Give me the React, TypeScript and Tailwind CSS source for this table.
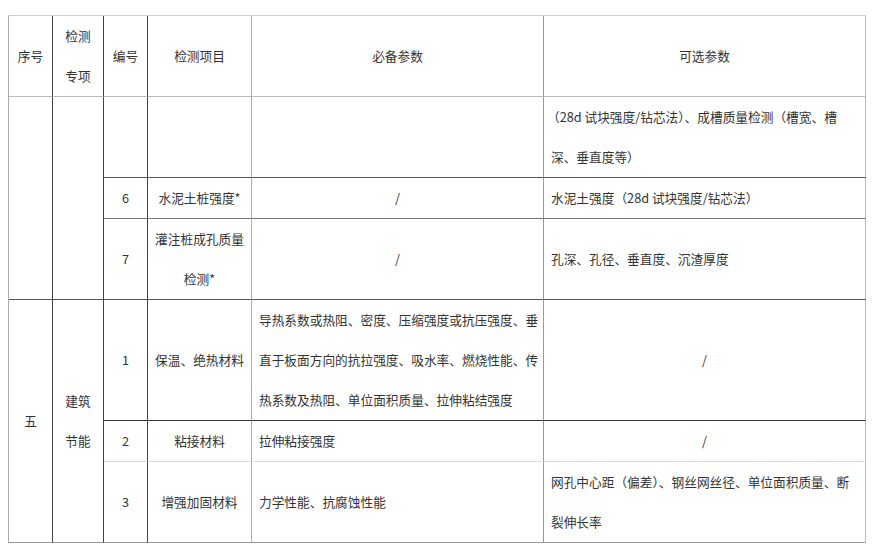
import React from 'react';

const font = { fontFamily: '"Microsoft YaHei", "Noto Sans CJK SC", "Noto Sans", sans-serif' };

export default function App() {
  return (
    <div className="w-[882px] h-[558px] bg-white pt-[15px] pl-2 text-[#333] text-[12.7px] leading-[40px]" style={font}>
      <table className="table-fixed w-[857px] border-separate border-spacing-0 border-t border-l border-t-[#cfcfcf] border-l-[#aaa]">
        <colgroup>
          <col className="w-[44px]" />
          <col className="w-[51px]" />
          <col className="w-[44px]" />
          <col className="w-[104px]" />
          <col className="w-[292px]" />
          <col className="w-[322px]" />
        </colgroup>
        <tbody>
          {/* header */}
          <tr className="h-[81px]">
            <td className="text-center align-middle border-r border-b border-r-[#444] border-b-[#bbb]">序号</td>
            <td className="text-center align-middle border-r border-b border-r-[#444] border-b-[#bbb]">
              检测<br />专项
            </td>
            <td className="text-center align-middle border-r border-b border-r-[#444] border-b-[#bbb]">编号</td>
            <td className="text-center align-middle border-r border-b border-r-[#aaa] border-b-[#bbb]">检测项目</td>
            <td className="text-center align-middle border-r border-b border-r-[#999] border-b-[#bbb]">必备参数</td>
            <td className="text-center align-middle border-r border-b border-r-[#bbb] border-b-[#bbb]">可选参数</td>
          </tr>

          {/* continuation row */}
          <tr className="h-[81px]">
            <td rowSpan={3} className="border-r border-b border-r-[#444] border-b-[#555]"></td>
            <td rowSpan={3} className="border-r border-b border-r-[#444] border-b-[#555]"></td>
            <td className="border-r border-b border-r-[#444] border-b-[#555]"></td>
            <td className="border-r border-b border-r-[#aaa] border-b-[#555]"></td>
            <td className="border-r border-b border-r-[#999] border-b-[#555]"></td>
            <td className="align-middle pl-[3px] border-r border-b border-r-[#bbb] border-b-[#555]">
              （28d 试块强度/钻芯法）、成槽质量检测（槽宽、槽<br />
              <span className="pl-[4px]">深、垂直度等）</span>
            </td>
          </tr>

          <tr className="h-[41px]">
            <td className="text-center align-middle border-r border-b border-r-[#444] border-b-[#777]">6</td>
            <td className="text-center align-middle border-r border-b border-r-[#aaa] border-b-[#777]">水泥土桩强度*</td>
            <td className="text-center align-middle border-r border-b border-r-[#999] border-b-[#777]">/</td>
            <td className="align-middle pl-[7px] border-r border-b border-r-[#bbb] border-b-[#777]">
              水泥土强度（28d 试块强度/钻芯法）
            </td>
          </tr>

          <tr className="h-[80px]">
            <td className="text-center align-middle border-r border-b border-r-[#444] border-b-[#555]">7</td>
            <td className="text-center align-middle border-r border-b border-r-[#aaa] border-b-[#555]">
              灌注桩成孔质量<br />检测*
            </td>
            <td className="text-center align-middle border-r border-b border-r-[#999] border-b-[#555]">/</td>
            <td className="align-middle pl-[7px] border-r border-b border-r-[#bbb] border-b-[#555]">
              孔深、孔径、垂直度、沉渣厚度
            </td>
          </tr>

          {/* 建筑节能 */}
          <tr className="h-[121px]">
            <td rowSpan={3} className="text-center align-middle border-r border-b border-r-[#444] border-b-[#999]">五</td>
            <td rowSpan={3} className="text-center align-middle border-r border-b border-r-[#444] border-b-[#999]">
              建筑<br />节能
            </td>
            <td className="text-center align-middle border-r border-b border-r-[#444] border-b-[#333]">1</td>
            <td className="text-center align-middle border-r border-b border-r-[#aaa] border-b-[#333]">保温、绝热材料</td>
            <td className="align-middle pl-[7px] border-r border-b border-r-[#999] border-b-[#333]">
              导热系数或热阻、密度、压缩强度或抗压强度、垂<br />
              直于板面方向的抗拉强度、吸水率、燃烧性能、传<br />
              热系数及热阻、单位面积质量、拉伸粘结强度
            </td>
            <td className="text-center align-middle border-r border-b border-r-[#bbb] border-b-[#333]">/</td>
          </tr>

          <tr className="h-[40px]">
            <td className="text-center align-middle border-r border-b border-r-[#444] border-b-[#ddd]">2</td>
            <td className="text-center align-middle border-r border-b border-r-[#aaa] border-b-[#ddd]">粘接材料</td>
            <td className="align-middle pl-[7px] border-r border-b border-r-[#999] border-b-[#ddd]">拉伸粘接强度</td>
            <td className="text-center align-middle border-r border-b border-r-[#bbb] border-b-[#ddd]">/</td>
          </tr>

          <tr className="h-[81px]">
            <td className="text-center align-middle border-r border-b border-r-[#444] border-b-[#999]">3</td>
            <td className="text-center align-middle border-r border-b border-r-[#aaa] border-b-[#999]">增强加固材料</td>
            <td className="align-middle pl-[7px] border-r border-b border-r-[#999] border-b-[#999]">力学性能、抗腐蚀性能</td>
            <td className="align-middle pl-[7px] border-r border-b border-r-[#bbb] border-b-[#999]">
              网孔中心距（偏差）、钢丝网丝径、单位面积质量、断<br />
              裂伸长率
            </td>
          </tr>
        </tbody>
      </table>
    </div>
  );
}
